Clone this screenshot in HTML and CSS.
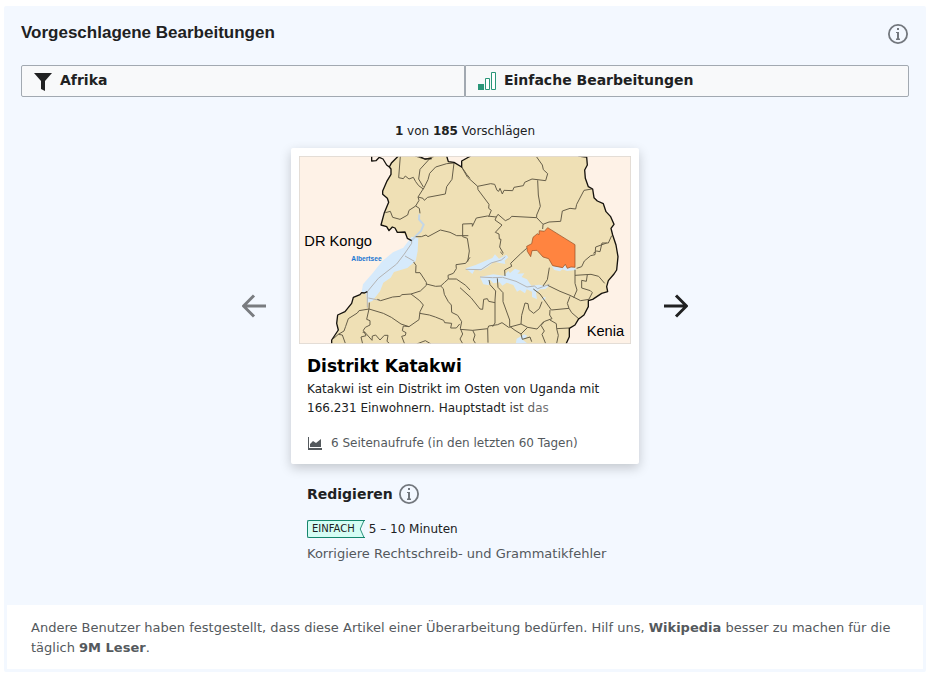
FILE: index.html
```html
<!DOCTYPE html>
<html lang="de">
<head>
<meta charset="utf-8">
<meta name="viewport" content="width=device-width, initial-scale=1">
<title>Vorgeschlagene Bearbeitungen</title>
<link rel="stylesheet" href="styles.css">
</head>
<body>
<svg class="defs" aria-hidden="true">
  <symbol id="info" viewBox="0 0 20 20">
    <circle cx="10" cy="10" r="9.1" fill="none" stroke="currentColor" stroke-width="1.8"/>
    <path fill="currentColor" d="M9 4h2v2H9zM8 8h3v6.500h1V16H8v-1.500h1V9H8z"/>
  </symbol>
</svg>
<main class="panel">
  <section class="content">
    <header class="head">
      <h1 class="title">Vorgeschlagene Bearbeitungen</h1>
      <button class="icon-button" type="button" aria-label="Informationen"><svg width="20" height="20"><use href="#info"/></svg></button>
    </header>
    <div class="filters">
      <button class="filter" type="button">
        <svg width="20" height="20" viewBox="0 0 20 20"><path fill="#202122" d="M1 2h18l-7 8v10l-4-2v-8z"/></svg>
        <span>Afrika</span>
      </button>
      <button class="filter" type="button">
        <svg width="20" height="20" viewBox="0 0 20 20"><path fill="#2a9678" d="M1 13h6v6H1z"/><path fill="#fff" stroke="#2a9678" d="M8.500 7.500h4v11h-4zM14.500 1.500h4v17h-4z"/></svg>
        <span>Einfache Bearbeitungen</span>
      </button>
    </div>
    <p class="count"><b>1</b> von <b>185</b> Vorschlägen</p>
    <div class="carousel">
      <button class="arrow" type="button" aria-label="Zurück" disabled><svg width="24" height="24" viewBox="0 0 24 24"><path d="M24 12H2M12 1.500 1.500 12 12 22.500"/></svg></button>
      <article class="card">
        <svg class="map" viewBox="0 0 996 564" role="img" aria-label="Karte">
          <rect width="996" height="564" fill="#fef2e7"/>
          <path fill="#efe0b5" d="M298 0 273 22 271 33 276 39 276 55 263 77 251 105 251 115 265 127 269 139 256 170 246 207 263 212 270 224 285 214 295 229 318 235 338 254 338 262 293 324 238 367 205 407 188 414 163 424 158 442 138 467 116 477 113 502 118 522 98 552 98 564H801L811 542 811 517 828 507 838 490 855 477 868 452 868 434 881 430 908 412 926 407 923 392 928 374 945 354 953 342 957 302 951 267 941 237 936 217 945 205 935 182 921 167 913 143 895 135 885 125 881 99 868 92 859 67 857 42 865 27 863 3 838 0H515L488 15 488 33 465 19 448 17 443 0H398L378 9 348 0Z"/>
          <g fill="#d6eafb">
            <path d="M338 242 358 247 356 285 350 315 325 336 285 348 275 365 253 380 243 406 220 435 205 440 201 412 188 407 192 385 222 350 250 315 282 289 313 275Z"/>
            <path d="M500 337 530 327 558 315 580 306 588 295 600 308 622 296 628 304 617 314 619 324 602 321 585 317 566 333 545 344 528 340 520 354Z"/>
            <path d="M543 363 583 355 614 359 628 345 633 351 648 338 664 344 655 353 676 352 668 363 684 370 697 389 720 386 735 389 754 387 739 399 723 400 711 410 714 430 699 423 699 407 683 400 678 412 663 402 654 407 643 387 623 380 610 389 602 379 583 382 573 371 570 388 553 385Z"/>
            <path d="M758 330 776 333 790 336 797 323 801 335 826 333 832 342 804 345 790 340 783 346 766 342ZM653 548 676 535 685 540 672 552 687 564H650ZM730 425l10-2-2 8-8 2z"/>
          </g>
          <path fill="#ff8440" stroke="#8d4a22" stroke-width="2" d="m746 215 82 51v68l-12-1-11 4-6-12-8 10-30-6-12-21-17-5-18-20-15 1-4 18-10-16-2-15 15-8 4-19 13-11 5 3 1-12 15 2z"/>
          <g fill="none" stroke="#b4b4b4" stroke-width="3">
            <path stroke="#c3d6e6" stroke-width="6" d="M361 175 360 190 374 206 366 225 352 238 338 254"/>
            <path d="M338 254 338 262 316 294 293 324 238 367 205 407V455"/>
            <path d="m318 300 28 16M208 426l35 7M500 340l46 1 30-20 31-9 12-10M543 363l38 2 30-1 40 12 33 17 22-3 10 8 35-13"/>
          </g>
          <g class="district">
            <g transform="translate(-27 -33)">
              <path d="M331 33 326 98 340 101 346 93 357 102 370 97 377 110 386 122 400 132 414 104 419 85 437 66 470 56 492 54M375 33 405 43 431 35M420 40 390 73 386 102 400 126M400 131 384 156 399 160 403 166 413 157 466 147 470 125 486 103 492 54M384 156 387 166 377 183 357 196 353 210 330 223 308 217 301 199 286 203M377 183 388 190 390 205M377 275 394 275 408 270 414 275 451 255 480 262 500 272 535 272M515 66 530 88 540 100"/>
            </g>
            <g transform="translate(-27 252)">
              <path d="M371 66 378 76 377 98 390 98 409 127 409 136 391 153 363 162 335 164 331 169 308 171 272 182 262 178M363 162 389 182 400 195 390 215 387 239 357 260 333 252 304 232 280 220 237 207 238 188M237 207 207 212 202 219 175 236 167 259 162 273 145 283 130 296M237 207 230 238 240 242 240 255 226 262 220 271 228 287 213 291 218 312M218 277 224 276 246 301 247 288 257 285 270 300 283 286 294 286 291 304 298 310M357 260 340 258 337 272 348 278 346 286 335 289 344 312M380 312 406 302 423 312M389 220 418 225 436 231 461 241 464 248 485 250 482 264 499 264 509 252M409 132 437 139 452 138 460 146 463 163 475 185 484 195 485 217 503 226 515 245 511 265 518 282 510 297 518 311M452 138 464 127 475 117 499 117 527 136 540 150M475 117 474 106 490 100 499 86 498 74 527 70 540 52M145 283 157 285 166 310"/>
            </g>
            <g transform="translate(483 -33)">
              <path d="M5 66 22 96 53 124 92 116 104 118 111 136 116 139 120 130 127 147 132 136 158 137 162 127 190 122 194 112 216 102 257 107 263 86 250 74 247 60 230 36M53 124 54 134 87 178 86 190 94 196 86 215M233 106 235 150 241 184 230 210 230 218 249 238 248 252M8 275 8 237 37 236 37 244 49 219 82 213 109 216 114 208 136 227 149 221 155 214 230 218M109 216 105 225 126 240 106 262 117 267 118 282 123 283 119 306 130 325M249 238 267 231 302 229 307 198 330 190 347 192 350 178 372 136 396 132M8 275 22 280 28 318 23 350M400 325 410 318 420 320 426 294 445 294 455 272"/>
            </g>
            <g transform="translate(483 252)">
              <path d="M121 36 129 44M200 25 182 41 152 70 155 79 134 90 135 108M220 147 240 162 274 210 327 205 322 190 330 169M345 89 345 130 351 150 341 173M263 136 300 154 330 166 362 182 387 178M268 83 262 119 249 138M345 106 393 103 416 109 434 130M382 104 379 124 365 121 365 144 391 152 397 158 387 177M350 85 365 80 373 63 392 47 405 44 407 21 440 9M87 120 90 134 107 153 105 180 105 249 98 260M105 188 86 184 82 176 71 178 68 208 60 207 33 173 0 143M112 115 114 142 129 158 129 185 149 240 149 259M0 268 38 271 83 266 86 258 113 254 126 248 146 262 183 252 185 226 195 189 204 191 207 209 221 220 238 206 246 185M270 210 269 225 276 236 254 244 243 256 253 273 246 283 257 311M149 259 165 271 183 282 203 262 183 252M203 262 231 267 252 244M83 266 84 308M270 240 289 251 290 266 327 264M290 266 295 286 290 310M327 205 335 218 357 237M38 271 45 285 40 300 47 311M183 282 187 298 210 291 215 305"/>
            </g>
          </g>
          <path class="border" d="M218 0V15L231 14 241 4 252 9 263 27 271 33M298 0 278 20 271 33 276 39 276 55 263 77 251 105 251 115 265 127 269 139 256 170 246 207 263 212 270 224 280 213 288 216 295 229 318 228 325 247 338 254M205 407 196 411 188 410 183 416 163 424 158 442 138 467 116 477 113 502 118 522 98 552 98 564M801 564 811 542 811 517 828 507 838 490 855 477 868 452 868 434 881 430 908 412 926 407 923 392 928 374 945 354 953 342 957 302 951 267 941 237 936 217 945 205 935 182 921 167 913 143 895 135 885 125 881 99 868 92 859 67 857 42 865 27 863 3 838 0M515 0 488 15 488 33 465 19 448 17 443 0M398 8 378 9 358 0"/>
          <text class="place" x="16" y="270">DR Kongo</text>
          <text class="place" x="863" y="539">Kenia</text>
          <text class="lake" x="157" y="314">Albertsee</text>
          <rect x="1" y="1" width="994" height="562" fill="none" stroke="#dfd9d3" stroke-width="3"/>
        </svg>
        <div class="card-body">
          <h2 class="card-title">Distrikt Katakwi</h2>
          <p class="extract">Katakwi ist ein Distrikt im Osten von Uganda mit 166.231 Einwohnern. Hauptstadt ist das</p>
          <p class="views">
            <svg width="16" height="16" viewBox="0 0 16 16"><path fill="#54595d" d="M1 2h1v11h13v2H1zM3 12V9l3-3 3 2 5-4v8z"/></svg>
            <span>6 Seitenaufrufe (in den letzten 60 Tagen)</span>
          </p>
        </div>
      </article>
      <button class="arrow" type="button" aria-label="Weiter"><svg width="24" height="24" viewBox="0 0 24 24"><path d="M0 12h22M12 1.500 22.500 12 12 22.500"/></svg></button>
    </div>
    <section class="task">
      <div class="task-head">
        <h2 class="task-title">Redigieren</h2>
        <button class="icon-button" type="button" aria-label="Informationen"><svg width="20" height="20"><use href="#info"/></svg></button>
      </div>
      <p class="effort">
        <span class="badge">EINFACH<svg width="6" height="18" viewBox="0 0 6 18"><path fill="#f3f8ff" d="M6 0H5L1 9l4 9h1z"/><path fill="none" stroke="#14866d" d="M5 0 1 9l4 9"/></svg></span>
        <span>5 – 10 Minuten</span>
      </p>
      <p class="hint">Korrigiere Rechtschreib- und Grammatikfehler</p>
    </section>
  </section>
  <footer class="foot">Andere Benutzer haben festgestellt, dass diese Artikel einer Überarbeitung bedürfen. Hilf uns, <b>Wikipedia</b> besser zu machen für die täglich <b>9M Leser</b>.</footer>
</main>
</body>
</html>
```
FILE: styles.css
```css
* { box-sizing: border-box; }
body {
  margin: 6px 6px 7px 4px;
  background: #fff;
  color: #202122;
  font: 12px/20px "DejaVu Sans", sans-serif;
}
h1, h2, p { margin: 0; }
button { color: inherit; font: inherit; cursor: pointer; }
svg { display: block; flex: none; }
.defs { display: none; }
.panel { border: 3px solid #f3f8ff; border-radius: 2px; }
.content { padding: 12px 14px 41px; background: #f3f8ff; }
.head { display: flex; justify-content: space-between; align-items: center; height: 24px; padding-right: 1px; }
.title { font: bold 17px/24px "Liberation Sans", sans-serif; }
.icon-button { padding: 0; border: 0; background: none; color: #72777d; }
.head .icon-button { margin-top: 2px; }
.filters { display: flex; margin-top: 20px; }
.filter {
  display: flex;
  flex: 1;
  align-items: center;
  gap: 7px;
  height: 32px;
  padding: 0 11px;
  border: 1px solid #a2a9b1;
  border-radius: 2px 0 0 2px;
  background: #f8f9fa;
  font-size: 14px;
  font-weight: bold;
}
.filter + .filter { border-radius: 0 2px 2px 0; }
.filter span { padding-bottom: 2px; }
.count { margin-top: 24px; text-align: center; }
.carousel { display: flex; justify-content: center; align-items: center; gap: 25px; margin-top: 7px; }
.arrow { padding: 0; border: 0; background: none; }
.arrow path { fill: none; stroke: #202122; stroke-width: 3; }
.arrow:disabled path { stroke: #797c80; }
.card {
  width: 348px;
  padding: 8px;
  border-radius: 2px;
  background: #fff;
  box-shadow: 0 4px 12px rgba(0, 0, 0, .2);
}
.map { width: 100%; height: auto; }
.district { fill: none; stroke: #665e49; stroke-width: 3; stroke-linejoin: round; }
.border { fill: none; stroke: #15120d; stroke-width: 4; stroke-linejoin: round; }
.place { font: 44px "Liberation Sans", sans-serif; }
.lake { fill: #1976d2; font: bold 20px "Liberation Sans", sans-serif; }
.card-body { padding: 9px 8px 3px; }
.card-title { color: #000; font-size: 17px; line-height: 26px; }
.extract { position: relative; margin-top: 1px; line-height: 19px; }
.extract::after {
  content: "";
  position: absolute;
  right: 0;
  bottom: 0;
  width: 40%;
  height: 19px;
  background: linear-gradient(to right, transparent, #fff);
}
.views { display: flex; align-items: center; gap: 8px; margin-top: 15px; color: #54595d; }
.task { width: 348px; margin: 20px auto 0; padding: 0 16px; }
.task-head { display: flex; align-items: center; gap: 6px; }
.task-title { font-size: 14px; line-height: 20px; }
.effort { display: flex; align-items: center; gap: 4px; margin-top: 15px; }
.badge {
  display: flex;
  gap: 4px;
  height: 18px;
  padding-left: 4px;
  border: 1px solid #14866d;
  border-right: 0;
  border-radius: 2px 0 0 2px;
  background: #d5fdf4;
  font-size: 10px;
  line-height: 16px;
}
.badge svg { height: 16px; }
.hint { margin-top: 5px; color: #54595d; font-size: 13px; }
.foot { padding: 13px 24px 11px; background: #fff; color: #54595d; font-size: 13px; }
```
